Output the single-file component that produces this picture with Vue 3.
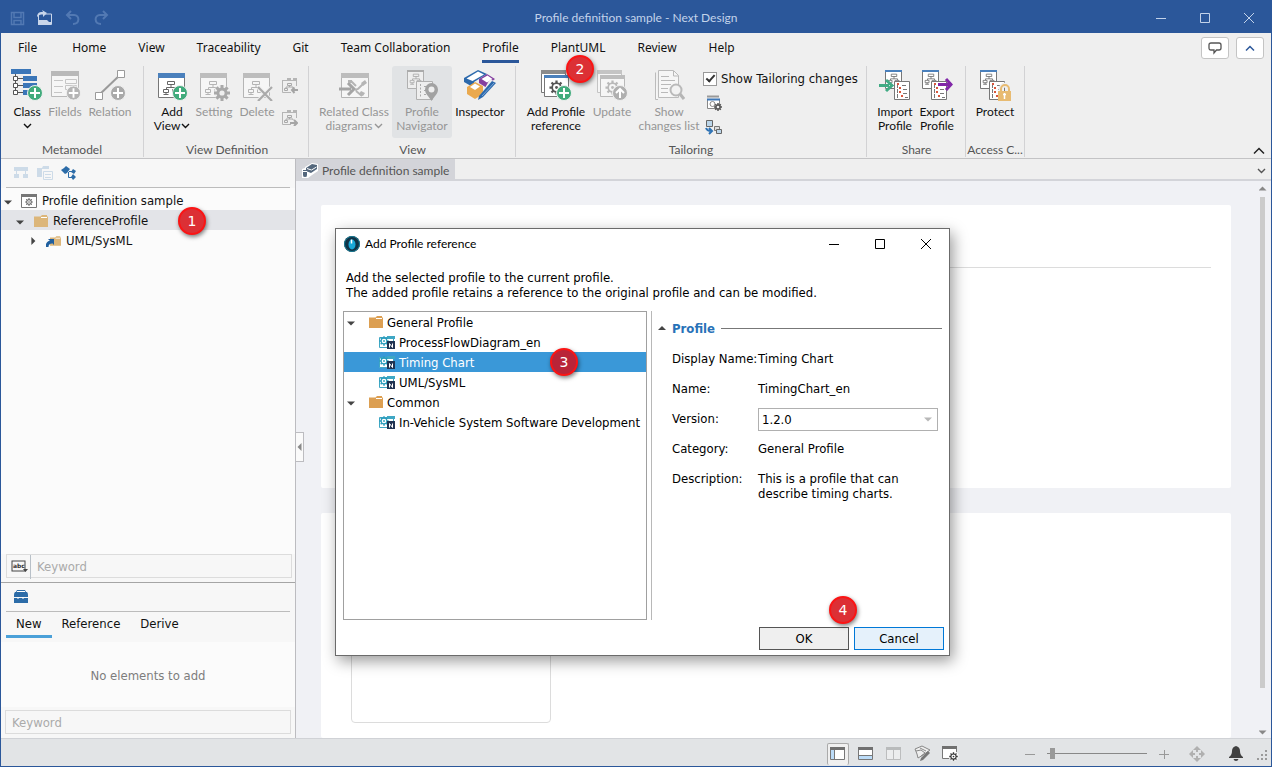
<script setup>
import { ref } from 'vue'

const menus = ['File', 'Home', 'View', 'Traceability', 'Git', 'Team Collaboration', 'Profile', 'PlantUML', 'Review', 'Help']
const activeMenu = ref('Profile')

const groups = [
  {
    title: 'Metamodel', cls: 'g-meta',
    buttons: [
      { icon: 'class', lines: ['Class'], drop: 'below', cls: 'w40' },
      { icon: 'fields', lines: ['Filelds'], off: true, cls: 'w36' },
      { icon: 'relation', lines: ['Relation'], off: true, cls: 'w54' }
    ]
  },
  {
    title: 'View Definition', cls: 'g-viewdef', small: ['doc-in', 'doc-out'],
    buttons: [
      { icon: 'addview', lines: ['Add', 'View'], drop: 'inline', cls: 'w40' },
      { icon: 'setting', lines: ['Setting'], off: true, cls: 'w44' },
      { icon: 'delete', lines: ['Delete'], off: true, cls: 'w42' }
    ]
  },
  {
    title: 'View', cls: 'g-view',
    buttons: [
      { icon: 'related', lines: ['Related Class', 'diagrams'], drop: 'inline', off: true, cls: 'w76' },
      { icon: 'navigator', lines: ['Profile', 'Navigator'], off: true, pressed: true, cls: 'w60' },
      { icon: 'inspector', lines: ['Inspector'], cls: 'w56' }
    ]
  },
  {
    title: 'Tailoring', cls: 'g-tailor', check: true,
    buttons: [
      { icon: 'addprofile', lines: ['Add Profile', 'reference'], cls: 'w68' },
      { icon: 'update', lines: ['Update'], off: true, cls: 'w44' },
      { icon: 'changes', lines: ['Show', 'changes list'], off: true, cls: 'w70' }
    ]
  },
  {
    title: 'Share', cls: 'g-share',
    buttons: [
      { icon: 'import', lines: ['Import', 'Profile'], cls: 'w42' },
      { icon: 'export', lines: ['Export', 'Profile'], cls: 'w42' }
    ]
  },
  { title: 'Access C...', cls: 'g-access', buttons: [{ icon: 'protect', lines: ['Protect'], cls: 'w58' }] }
]

const showChanges = ref(true)
const paletteTabs = ['New', 'Reference', 'Derive']
const activePalette = ref('New')
const profiles = [
  { name: 'General Profile', folder: true },
  { name: 'ProcessFlowDiagram_en' },
  { name: 'Timing Chart' },
  { name: 'UML/SysML' },
  { name: 'Common', folder: true },
  { name: 'In-Vehicle System Software Development' }
]
const selected = ref('Timing Chart')
const zoom = ref(3)
</script>

<template>
  <div class="window">
    <svg class="defs" width="0" height="0" aria-hidden="true">
      <symbol id="tree" viewBox="0 0 18 16">
        <path fill="none" stroke="currentColor" d="M5.500 0.500h7v3h-7zM9 3.500v3M4.500 8v-1.500h9V8M1.500 8.500h5v3h-5zM10.500 8.500h5v3h-5zM4 11.500v2M1.500 13.500h5" />
      </symbol>
      <symbol id="gear" viewBox="0 0 16 16">
        <g stroke="currentColor" stroke-width="3"><path d="M8 0v16M0 8h16M2.400 2.400l11.200 11.200M13.600 2.400L2.400 13.600" /></g>
        <circle cx="8" cy="8" r="5.500" fill="currentColor" /><circle cx="8" cy="8" r="2.600" fill="#efefef" />
      </symbol>
      <symbol id="gearline" viewBox="0 0 16 16">
        <g stroke="currentColor" stroke-width="2.400"><path d="M8 0.500v3M8 12.500v3M0.500 8h3M12.500 8h3M2.700 2.700l2 2M11.300 11.300l2 2M13.300 2.700l-2 2M4.700 11.300l-2 2" /></g>
        <circle cx="8" cy="8" r="4.600" fill="none" stroke="currentColor" stroke-width="1.800" /><circle cx="8" cy="8" r="1.500" fill="currentColor" />
      </symbol>
      <symbol id="plus" viewBox="0 0 16 16">
        <circle cx="8" cy="8" r="7.500" fill="currentColor" stroke="#efefef" /><path d="M8 3v10M3 8h10" stroke="#fff" stroke-width="2" />
      </symbol>
      <symbol id="chev" viewBox="0 0 9 6"><path d="M1 1l3.500 3.500L8 1" fill="none" stroke="currentColor" stroke-width="1.400" /></symbol>
      <symbol id="folder" viewBox="0 0 14 12"><path d="M0 1.500h6.500L8 0h5v1.500h1V12H0z" fill="currentColor" /><path d="M7 2.500h6" stroke="#fff" /></symbol>
      <symbol id="class" viewBox="0 0 32 32">
        <path fill="#3b76b8" d="M0 0h20v5H0zM12 7h14v5H12zM12 14h14v5H12zM12 21h14v5H12z" />
        <path fill="none" stroke="#555" d="M4.500 5v19M4.500 9.500H12M4.500 16.500H12M4.500 23.500H12" />
        <path fill="#fff" stroke="#555" d="M2.500 7.500h4v4h-4zM2.500 14.500h4v4h-4zM2.500 21.500h4v4h-4z" />
        <use href="#plus" x="16" y="16" width="16" height="16" color="#41ab7c" />
      </symbol>
      <symbol id="fields" viewBox="0 0 32 32">
        <path fill="#f6f6f6" stroke="#b9b9b9" d="M2.500 3.500h27v24h-27z" /><path fill="#b9b9b9" d="M2 2h28v5H2z" />
        <path fill="none" stroke="#c6c6c6" d="M5 11.500h9M5 17.500h9M5 23.500h8M16.500 10.500h11v4h-11zM16.500 16.500h11v4h-11z" />
        <use href="#plus" x="17" y="16" width="15" height="16" color="#b5b5b5" />
      </symbol>
      <symbol id="relation" viewBox="0 0 32 32">
        <path stroke="#9a9a9a" stroke-width="2" d="M5 26L27 5" />
        <path fill="#fff" stroke="#9a9a9a" d="M1.500 23.500h7v7h-7zM23.500 1.500h7v7h-7z" />
        <use href="#plus" x="16" y="16" width="16" height="16" color="#a9a9a9" />
      </symbol>
      <symbol id="addview" viewBox="0 0 32 32">
        <path fill="#fff" stroke="#777" d="M2.500 5.500h26v23h-26z" /><path fill="#4a80bc" d="M2 4h27v5H2z" />
        <use href="#tree" x="6" y="12" width="18" height="16" color="#666" />
        <use href="#plus" x="16" y="16" width="16" height="16" color="#41ab7c" />
      </symbol>
      <symbol id="setting" viewBox="0 0 32 32">
        <path fill="#f6f6f6" stroke="#b5b5b5" d="M2.500 5.500h26v23h-26z" /><path fill="#bdbdbd" d="M2 4h27v5H2z" />
        <use href="#tree" x="6" y="12" width="18" height="16" color="#b5b5b5" />
        <circle cx="24" cy="24" r="8" fill="#efefef" /><use href="#gear" x="16" y="16" width="16" height="16" color="#a9a9a9" />
      </symbol>
      <symbol id="delete" viewBox="0 0 32 32">
        <path fill="#f6f6f6" stroke="#b5b5b5" d="M2.500 5.500h26v23h-26z" /><path fill="#bdbdbd" d="M2 4h27v5H2z" />
        <use href="#tree" x="6" y="12" width="18" height="16" color="#b5b5b5" />
        <path d="M17 18l14 14M31 18L17 32" stroke="#efefef" stroke-width="4" /><path d="M17 18l14 14M31 18L17 32" stroke="#aaa" stroke-width="2.200" />
      </symbol>
      <symbol id="doc-in" viewBox="0 0 16 16">
        <path fill="none" stroke="#b5b5b5" d="M14.500 8V2.500H0.500v12H9" /><path fill="#b5b5b5" d="M5 0h4v2H5zM11 0h4v3h-4zM0 2h15v1H0z" />
        <path fill="none" stroke="#a9a9a9" d="M5.500 5.500h4v2h-4zM7.500 7.500V9M4 10.500V9h7v1M2.500 10.500h3v2h-3z" /><path d="M16 12h-5M12.500 9.500L10 12l2.500 3" stroke="#a5a5a5" stroke-width="2" fill="none" />
      </symbol>
      <symbol id="doc-out" viewBox="0 0 16 16">
        <path fill="none" stroke="#b5b5b5" d="M14.500 8V2.500H0.500v12H9" /><path fill="#b5b5b5" d="M5 0h4v2H5zM11 0h4v3h-4zM0 2h15v1H0z" />
        <path fill="none" stroke="#a9a9a9" d="M5.500 5.500h4v2h-4zM7.500 7.500V9M4 10.500V9h7v1M2.500 10.500h3v2h-3z" /><path d="M8 13h6M12 10l3 3-3 3" stroke="#a5a5a5" stroke-width="2" fill="none" />
      </symbol>
      <symbol id="related" viewBox="0 0 32 32">
        <path fill="#f6f6f6" stroke="#b5b5b5" d="M3.500 5.500h27v23h-27z" /><path fill="#bdbdbd" d="M3 4h28v5H3z" />
        <path d="M1 20h12M10 14l6 6-6 6" stroke="#a5a5a5" stroke-width="3" fill="none" />
        <path d="M13 12l5 5M17 21l3-1 5-5M18 22l6 5" stroke="#b5b5b5" stroke-width="2" fill="none" />
        <path fill="#b5b5b5" d="M23 14l4-3 2 3-4 3zM23 22l4 2-2 3-4-2zM10 11h4v3h-4z" />
      </symbol>
      <symbol id="navigator" viewBox="0 0 32 32">
        <path fill="#eee" stroke="#b0b0b0" d="M1.500 1.500h16v18h-16z" /><path fill="#ababab" d="M1 1h17v2H1z" />
        <use href="#tree" x="3" y="4" width="14" height="14" color="#a5a5a5" />
        <path fill="#eee" stroke="#b0b0b0" d="M10.500 12.500h16v18h-16z" /><path d="M14.500 15v13M18 17.500h7M18 21.500h4M18 25.500h4" stroke="#aaa" stroke-dasharray="2 1.500" />
        <path fill="#a2a2a2" d="M25.500 32c-3-5-6.500-7-6.500-11.500a6.500 6.500 0 0113 0c0 4.500-3.500 6.500-6.500 11.500z" /><circle cx="25.500" cy="20.500" r="3" fill="#eee" />
      </symbol>
      <symbol id="inspector" viewBox="0 0 32 32">
        <path fill="#2c69ac" d="M0 9L14 1l9 4-13 8v4H7l-7-4z" /><path fill="#fff" d="M2.500 9.500L14 2.500l6 3L8.500 12z" />
        <path fill="#8440a0" d="M15 10l8-5 8 5-8 6v3l-8-5z" /><path fill="#fff" d="M17.500 10l6-3.500 5 3.500-5.500 3.500z" />
        <path fill="#eaa94e" d="M3 18l8-5 8 4v8l-8 5-8-5z" /><path fill="#fff" d="M6 18l5-3.500 5 3-5 3.500z" />
        <path fill="#efefef" d="M26 10l7 4-16 18-4 1z" /><path fill="#2c69ac" d="M28 12l4 2-13 14-5 3 1-4z" /><path d="M18 27L30 14" stroke="#7ba6d6" />
      </symbol>
      <symbol id="addprofile" viewBox="0 0 32 32">
        <path fill="#fff" stroke="#777" d="M1.500 1.500h24v22h-24z" /><path fill="#8b8b8b" d="M1 1h25v4H1z" />
        <path fill="#fff" stroke="#777" d="M4.500 6.500h24v21h-24z" /><path fill="#4a80bc" d="M4 6h25v3H4z" />
        <use href="#gearline" x="9" y="11" width="15" height="15" color="#555" />
        <use href="#plus" x="16" y="16" width="16" height="16" color="#41ab7c" />
      </symbol>
      <symbol id="update" viewBox="0 0 32 32">
        <path fill="#f6f6f6" stroke="#c4c4c4" d="M1.500 1.500h24v22h-24z" /><path fill="#c4c4c4" d="M1 1h25v4H1z" />
        <path fill="#f6f6f6" stroke="#b9b9b9" d="M4.500 6.500h24v21h-24z" /><path fill="#bdbdbd" d="M4 6h25v4H4z" />
        <use href="#gearline" x="9" y="11" width="15" height="15" color="#b9b9b9" />
        <circle cx="24" cy="24" r="7.500" fill="#b0b0b0" stroke="#efefef" /><path d="M24 29v-8M20 24l4-4 4 4" fill="none" stroke="#fff" stroke-width="2" />
      </symbol>
      <symbol id="changes" viewBox="0 0 32 32">
        <path fill="#f6f6f6" stroke="#bbb" d="M5 30.500H2.500v-27M5.500 1.500h15l5 5v22h-20z" /><path fill="none" stroke="#b9b9b9" d="M20.500 2v5h5M8 7.500h8M8 11.500h14M8 15.500h10M8 19.500h7M8 23.500h7" />
        <circle cx="23" cy="21" r="5.500" fill="#f2f2f2" stroke="#b9b9b9" stroke-width="2" /><path d="M27 25l4 5" stroke="#b5b5b5" stroke-width="3" />
      </symbol>
      <symbol id="sheets" viewBox="0 0 32 32">
        <path fill="#fff" stroke="#777" d="M1.500 1.500h16v18h-16z" /><path fill="#4a80bc" d="M1 1h17v2H1z" />
        <use href="#tree" x="3" y="4" width="14" height="14" color="#666" />
        <path fill="#fff" stroke="#777" d="M10.500 12.500h15v18h-15z" /><path d="M18 16.500h5M19 20.500h4M19 24.500h4M21 28.500h3M13.500 15v14" stroke="#777" stroke-dasharray="4 1" />
        <path fill="#d9563c" d="M13 14h2v2h-2zM15 18h2v2h-2zM15 22h2v2h-2zM17 26h2v2h-2z" />
      </symbol>
      <symbol id="import" viewBox="0 0 32 32"><use href="#sheets" x="5" width="32" height="32" /><path d="M0 16.500h10M7 11l6 5.500L7 22" stroke="#41ab84" stroke-width="3" fill="none" /></symbol>
      <symbol id="export" viewBox="0 0 32 32"><use href="#sheets" width="32" height="32" /><path d="M17 15.500h11M25 10l5 5.500-5 5.500" stroke="#8127a8" stroke-width="3" fill="none" /></symbol>
      <symbol id="protect" viewBox="0 0 32 32">
        <use href="#sheets" width="32" height="32" /><path d="M22 22v-2a4 4 0 018 0v2" stroke="#efefef" stroke-width="5" fill="none" />
        <path d="M22 22v-2a4 4 0 018 0v3" stroke="#e8bb72" stroke-width="2" fill="none" /><path fill="#e8bb72" d="M19 22h13v10H19z" /><path d="M25.500 24v6M24 25.500h3" stroke="#fff" stroke-width="1.500" />
      </symbol>
      <symbol id="boxes" viewBox="0 0 16 16">
        <path fill="#fff" d="M3 4l7-4 6 1v7l-6 4-4 3H0V6l3-1z" /><path fill="#54677c" d="M4 5l6-4 5 1v4l-6 4-5-2zM1 7h4v5H1z" /><path stroke="#fff" fill="none" d="M5 5.500l4.500 1.500L14.500 4M1 8.500h4" /><ellipse cx="3" cy="12.500" rx="2" ry="1.500" fill="#54677c" />
      </symbol>
      <symbol id="profileitem" viewBox="0 0 16 13">
        <path fill="#fff" stroke="#3fa7c4" d="M0.500 1.500h14v10h-14z" /><path fill="#3fa7c4" d="M8 0h8v3H8z" /><use href="#gearline" x="0" y="0" width="10" height="10" color="#2b9cbc" />
        <path fill="#1f3352" d="M8 5h8v8H8z" /><path d="M10.500 11.500v-4l3 4v-4" stroke="#fff" fill="none" />
      </symbol>
      <symbol id="panel" viewBox="0 0 16 14"><path fill="#fff" stroke="#777" d="M0.500 0.500h14v12h-14z" /><path fill="#707070" d="M0 0h15v3H0z" /></symbol>
    </svg>

    <header class="titlebar">
      <div class="quick">
        <button type="button" class="ico faint" aria-label="Save"><svg width="16" height="16"><path d="M2.500 2.500h12v12h-12zM5 2.500v5h7v-5M5 14.500v-4h7v4" fill="none" stroke="currentColor" stroke-width="1.500" /></svg></button>
        <button type="button" class="ico bright" aria-label="Open"><svg width="16" height="16"><path d="M8 4h6.500v10.500h-13V5" fill="none" stroke="currentColor" /><path d="M1 10h9l2 2h2v3H1zM0 6c1-4 3-4 6-4l-1-2 5 3-4 4V4.500C3 4.500 2 5 0 7z" fill="currentColor" /></svg></button>
        <button type="button" class="ico faint" aria-label="Undo"><svg width="16" height="16"><path d="M6 1L2 5l4 4M2 5h7c6 0 6 9-1 9" fill="none" stroke="currentColor" stroke-width="2" /></svg></button>
        <button type="button" class="ico faint" aria-label="Redo"><svg width="16" height="16"><path d="M10 1l4 4-4 4M14 5H7c-6 0-6 9 1 9" fill="none" stroke="currentColor" stroke-width="2" /></svg></button>
      </div>
      <h1>Profile definition sample - Next Design</h1>
      <div class="winbtns">
        <button type="button" class="ico" aria-label="Minimize"><svg width="12" height="12"><path d="M1 6.500h10" stroke="currentColor" /></svg></button>
        <button type="button" class="ico" aria-label="Maximize"><svg width="12" height="12"><path d="M1.500 1.500h9v9h-9z" fill="none" stroke="currentColor" /></svg></button>
        <button type="button" class="ico" aria-label="Close"><svg width="12" height="12"><path d="M1 1l10 10M11 1L1 11" stroke="currentColor" /></svg></button>
      </div>
    </header>

    <nav class="menubar">
      <button v-for="m in menus" :key="m" type="button" class="menu" :class="{ active: m === activeMenu }" @click="activeMenu = m">{{ m }}</button>
      <div class="menu-right">
        <button type="button" class="boxbtn" aria-label="Feedback"><svg width="14" height="13"><path d="M3 1h8q2 0 2 2v3q0 2-2 2H8.500L6 11V8H3Q1 8 1 6V3q0-2 2-2z" fill="none" stroke="#555" stroke-width="1.300" /></svg></button>
        <button type="button" class="boxbtn blue" aria-label="Collapse"><svg width="10" height="7"><path d="M1 5.500l4-4 4 4" fill="none" stroke="currentColor" stroke-width="1.500" /></svg></button>
      </div>
    </nav>

    <section class="ribbon">
      <div v-for="g in groups" :key="g.title" class="group" :class="g.cls">
        <div class="group-body">
          <button v-for="b in g.buttons" :key="b.icon" type="button" class="big" :class="[b.cls, { off: b.off, pressed: b.pressed }]">
            <svg width="32" height="32"><use :href="'#' + b.icon" /></svg>
            <span v-for="(l, i) in b.lines" :key="l" class="line">{{ l }}<svg v-if="b.drop === 'inline' && i === 1" width="9" height="6"><use href="#chev" /></svg></span>
            <span v-if="b.drop === 'below'" class="line"><svg width="9" height="6"><use href="#chev" /></svg></span>
          </button>
          <div v-if="g.small" class="smallcol">
            <button v-for="s in g.small" :key="s" type="button" class="ico" :aria-label="s"><svg width="16" height="16"><use :href="'#' + s" /></svg></button>
          </div>
          <div v-if="g.check" class="checkcol">
            <label class="check"><input v-model="showChanges" type="checkbox"><span>Show Tailoring changes</span></label>
            <button type="button" class="ico" aria-label="Tailoring settings"><svg width="18" height="16"><path d="M2 1.500h12" stroke="#999" stroke-width="2" /><path d="M2.500 4.500h12v9h-12z" fill="#fff" stroke="#888" /><path d="M2 4.500h13" stroke="#3f78b8" stroke-width="2" /><circle cx="7.500" cy="9" r="2.500" fill="none" stroke="#888" /><use href="#gear" x="9" y="8" width="8" height="8" color="#555" /></svg></button>
            <button type="button" class="ico" aria-label="Apply tailoring"><svg width="18" height="16"><path d="M1.500 1.500h6v6h-6z" fill="#bcd6ea" stroke="#666" /><path d="M9.500 7.500h5v4h-5z" fill="#ddd" stroke="#777" /><path d="M11.500 10.500h5v4h-5z" fill="#bcd6ea" stroke="#666" /><path d="M1 9q1 3 5 3M4 9l3 3-3 3" fill="none" stroke="#2f73b5" stroke-width="2" /></svg></button>
          </div>
        </div>
        <div class="group-title">{{ g.title }}</div>
      </div>
      <button type="button" class="ico fold" aria-label="Collapse ribbon"><svg width="12" height="8"><path d="M1 6.500l5-5 5 5" fill="none" stroke="#222" stroke-width="1.500" /></svg></button>
    </section>

    <main class="work">
      <aside class="side">
        <div class="toolbar">
          <button type="button" class="ico pale" aria-label="Hierarchy"><svg width="16" height="14"><path fill="currentColor" d="M1 1h14v4H1zM3 5h1v4H3zM12 5h1v4h-1zM1 8h5v4H1zM10 8h5v4h-5z" /></svg></button>
          <button type="button" class="ico pale" aria-label="Folders"><svg width="16" height="14"><path fill="currentColor" d="M0 2h5l1-2h6v3H5v8H0z" /><path d="M6.500 5.500h9v8h-9zM8 8.500h6M8 11.500h6" fill="none" stroke="currentColor" /></svg></button>
          <button type="button" class="ico deep" aria-label="Relations"><svg width="16" height="14"><path fill="currentColor" d="M0 4l3-2 2-2 4 3-3 4-2 1zM12 3l3 2-2 3-3-2zM12 8l3 3-3 3-2-3z" /><path d="M7.500 6v5.500H11M8 5.500h3" fill="none" stroke="currentColor" /></svg></button>
        </div>
        <ul class="tree">
          <li class="row"><i class="tri down"></i><svg class="t-ico" width="16" height="14"><path d="M0.500 1.500h15v12H0.500z" fill="#fff" stroke="#777" /><path d="M0 1.500h16" stroke="#777" stroke-width="3" /><use href="#gearline" x="4" y="4" width="8" height="8" color="#555" /></svg>Profile definition sample</li>
          <li class="row lvl1 sel"><i class="tri down"></i><svg class="t-ico tan" width="14" height="12"><use href="#folder" /></svg>ReferenceProfile</li>
          <li class="row lvl2"><i class="tri right"></i><svg class="t-ico tan" width="15" height="13"><use href="#folder" x="4" y="0" width="11" height="12" /><path d="M1 12q0-5 5-5" fill="none" stroke="#1f5f9f" stroke-width="3" /><path d="M2 4h6v6z" fill="#1f5f9f" /></svg>UML/SysML</li>
        </ul>
        <div class="search">
          <svg width="24" height="24" aria-hidden="true"><rect x="5" y="6" width="13" height="10" fill="none" stroke="#444" /><text x="6" y="13" class="abc">abc</text><path d="M16 14h5l-2.500 3z" fill="#444" /></svg>
          <input type="text" placeholder="Keyword" aria-label="Model keyword">
        </div>
        <section class="palette">
          <div class="toolbar">
            <button type="button" class="ico deep" aria-label="Toolbox"><svg width="16" height="14"><path fill="currentColor" d="M4 0h8l1 2h1q1 1 1 3v2H1V5q0-2 1-3h1zM1 8h14v5H1z" /><path d="M4 1.500h8M5 7v2M10 7v2" stroke="#fff" /></svg></button>
          </div>
          <div class="ptabs">
            <button v-for="t in paletteTabs" :key="t" type="button" class="ptab" :class="{ active: t === activePalette }" @click="activePalette = t">{{ t }}</button>
          </div>
          <p class="empty">No elements to add</p>
          <input type="text" class="kw" placeholder="Keyword" aria-label="Element keyword">
        </section>
      </aside>

      <section class="editor">
        <div class="doctabs">
          <button type="button" class="doctab"><svg width="16" height="16"><use href="#boxes" /></svg>Profile definition sample</button>
          <button type="button" class="ico more" aria-label="Open documents"><svg width="9" height="6"><use href="#chev" /></svg></button>
        </div>
        <div class="canvas">
          <div class="cards">
            <div class="card first"><hr></div>
            <div class="card second"><div class="tile"></div></div>
          </div>
          <div class="scroll"><i class="tri up"></i><div class="thumb"></div><i class="tri down"></i></div>
          <button type="button" class="handle" aria-label="Collapse panel"><svg width="5" height="8"><path d="M4.500 0v8L0.500 4z" fill="#888" /></svg></button>
        </div>
      </section>
    </main>

    <footer class="status">
      <button type="button" class="ico st on" aria-label="Left pane"><svg width="16" height="14"><use href="#panel" /><path fill="#bcdcf8" d="M1 3h3v9H1z" /><path d="M4.500 3v9" stroke="#777" /></svg></button>
      <button type="button" class="ico st" aria-label="Bottom pane"><svg width="16" height="14"><use href="#panel" /><path fill="#bcdcf8" d="M1 9h13v3H1z" /><path d="M1 8.500h13" stroke="#777" /></svg></button>
      <button type="button" class="ico st dim" aria-label="Split pane"><svg width="16" height="14"><use href="#panel" /><path d="M7.500 3v10" stroke="#777" /></svg></button>
      <button type="button" class="ico st" aria-label="Inspector"><svg width="17" height="17" viewBox="0 0 17 17"><path fill="#eee" stroke="#888" d="M1 4l7-3 8 4-7 5-5 3-1-4z" /><path fill="none" stroke="#888" d="M2 6l5-1 4 3-4 3M6 3l6 3" /><path fill="#777" d="M14 6l2 2-7 7-3 1 1-3z" /></svg></button>
      <button type="button" class="ico st" aria-label="View settings"><svg width="17" height="15"><use href="#panel" width="16" height="14" /><circle cx="11.500" cy="10" r="5" fill="#fff" /><use href="#gearline" x="7" y="6" width="9" height="9" color="#333" /></svg></button>
      <div class="zoombar">
        <button type="button" class="ico" aria-label="Zoom out"><svg width="10" height="10"><path d="M0 5.500h10" stroke="#999" /></svg></button>
        <input v-model="zoom" type="range" min="0" max="100" aria-label="Zoom">
        <button type="button" class="ico" aria-label="Zoom in"><svg width="10" height="10"><path d="M0 5.500h10M5.500 1v9" stroke="#999" /></svg></button>
      </div>
      <button type="button" class="ico fit" aria-label="Fit"><svg width="16" height="16"><path fill="#b0b0b0" d="M8 0l4 4H9v2H7V4H4zM8 16l4-4H9v-2H7v2H4zM0 8l4-4v3h2v2H4v3zM16 8l-4-4v3h-2v2h2v3z" /></svg></button>
      <button type="button" class="ico bell" aria-label="Notifications"><svg width="14" height="15"><path fill="#404040" d="M7 0q4 1 4 5 0 4 3 6v1H0v-1q3-2 3-6 0-4 4-5zM4.500 13h5Q9 15 7 15t-2.500-2z" /></svg></button>
      <svg class="grip" width="11" height="11"><path fill="#999" d="M8 0h2v2H8zM8 4h2v2H8zM8 8h2v2H8zM4 4h2v2H4zM4 8h2v2H4zM0 8h2v2H0z" /></svg>
    </footer>

    <div class="dialog" role="dialog" aria-labelledby="dlg-title">
      <div class="dlg-head">
        <svg width="16" height="16"><circle cx="8" cy="8" r="8" fill="#0f3347" /><circle cx="8" cy="8" r="7.500" fill="none" stroke="#167c95" /><ellipse cx="8" cy="8.500" rx="3.500" ry="5" fill="#18a8d8" /><path d="M7.500 3.500v4" stroke="#fff" stroke-width="1.500" /></svg>
        <h2 id="dlg-title">Add Profile reference</h2>
        <button type="button" class="ico" aria-label="Minimize dialog"><svg width="12" height="12"><path d="M1 6.500h10" stroke="currentColor" /></svg></button>
        <button type="button" class="ico" aria-label="Maximize dialog"><svg width="12" height="12"><path d="M1.500 1.500h9v9h-9z" fill="none" stroke="currentColor" /></svg></button>
        <button type="button" class="ico" aria-label="Close dialog"><svg width="12" height="12"><path d="M1 1l10 10M11 1L1 11" stroke="currentColor" /></svg></button>
      </div>
      <p class="intro">Add the selected profile to the current profile.<br>The added profile retains a reference to the original profile and can be modified.</p>
      <div class="dlg-body">
        <ul class="plist">
          <li v-for="p in profiles" :key="p.name" class="row" :class="{ leaf: !p.folder, picked: p.name === selected }" @click="selected = p.name">
            <template v-if="p.folder"><i class="tri down"></i><svg class="t-ico orange" width="14" height="12"><use href="#folder" /></svg></template>
            <svg v-else class="p-ico" width="16" height="13"><use href="#profileitem" /></svg>{{ p.name }}
          </li>
        </ul>
        <section class="detail">
          <h3><i class="tri up"></i><span>Profile</span></h3>
          <dl>
            <dt>Display Name:</dt><dd>Timing Chart</dd>
            <dt>Name:</dt><dd>TimingChart_en</dd>
            <dt><label for="version">Version:</label></dt>
            <dd class="ver"><select id="version"><option>1.2.0</option></select><i class="tri down"></i></dd>
            <dt>Category:</dt><dd>General Profile</dd>
            <dt>Description:</dt><dd>This is a profile that can describe timing charts.</dd>
          </dl>
        </section>
      </div>
      <div class="dlg-foot">
        <button type="button" class="btn">OK</button>
        <button type="button" class="btn primary">Cancel</button>
      </div>
      <span class="badge b3">3</span>
      <span class="badge b4">4</span>
    </div>
    <span class="badge b1">1</span>
    <span class="badge b2">2</span>
  </div>
</template>

<style>
body { margin: 0; }
</style>

<style scoped>
.window {
  --wide: "DejaVu Sans Condensed", "DejaVu Sans", Verdana, sans-serif;
  --menu: "Noto Sans", "Open Sans", sans-serif;
  --ui: Lato, "Open Sans", sans-serif;
  position: relative;
  display: flex;
  flex-direction: column;
  box-sizing: border-box;
  height: 100vh;
  border: 1px solid #2b579a;
  border-top: 0;
  overflow: hidden;
  background: #efefef;
  color: #111;
  font: 12px/14px var(--ui);
}
.window *, .window *::after { box-sizing: border-box; }
.defs { position: absolute; }
button, input, select { font: inherit; color: inherit; margin: 0; }
button { padding: 0; border: 0; background: none; }
h1, h2, h3, p, ul, dl, dd { margin: 0; padding: 0; font-weight: normal; }
ul { list-style: none; }
.ico { display: flex; align-items: center; justify-content: center; }
svg { display: block; flex: none; }

.titlebar { flex: none; display: grid; grid-template-columns: 1fr auto 1fr; align-items: center; height: 33px; padding-top: 2px; background: #2b579a; color: #c3d3ea; }
.titlebar h1 { font-size: 12px; }
.quick { display: flex; gap: 12px; padding-left: 8px; }
.faint { color: #5279b3; }
.bright { color: #c9d6ea; }
.winbtns { display: flex; justify-content: flex-end; gap: 32px; padding-right: 16px; }

.menubar { flex: none; display: flex; gap: 32px; height: 30px; padding-left: 17px; font-family: var(--menu); }
.menu { height: 30px; border-bottom: 3px solid transparent; line-height: 29px; white-space: nowrap; }
.menu:first-child { margin-right: 3px; }
.menu.active { border-color: #2b579a; }
.menu-right { display: flex; gap: 7px; margin: 4px 7px 0 auto; }
.boxbtn { display: flex; align-items: center; justify-content: center; width: 28px; height: 22px; border: 1px solid #c4c4c4; border-radius: 3px; background: #fff; }
.blue { color: #2b579a; }

.ribbon { flex: none; position: relative; display: flex; height: 96px; padding: 3px 0 1px; border-bottom: 1px solid #c3c3c5; }
.group { display: flex; flex-direction: column; justify-content: space-between; border-right: 1px solid #d2d2d4; }
.g-meta { width: 143px; padding-left: 6px; }
.g-viewdef { width: 165px; padding-left: 8px; }
.g-view { width: 207px; padding-left: 7px; }
.g-tailor { width: 351px; padding-left: 6px; }
.g-share { width: 99px; padding-left: 7px; }
.g-access { width: 59px; }
.group-body { display: flex; }
.group-title { padding-right: 6px; color: #555; text-align: center; }
.g-access .group-title { padding: 0; white-space: nowrap; }
.big { display: flex; flex-direction: column; align-items: center; height: 72px; padding-top: 3px; border-radius: 3px; }
.big > svg { margin-bottom: 4px; }
.big.off { color: #969696; }
.big.pressed { background: #e1e3e5; }
.line { display: flex; align-items: center; gap: 1px; height: 14px; white-space: nowrap; }
.w36 { width: 36px; } .w40 { width: 40px; } .w42 { width: 42px; } .w44 { width: 44px; } .w54 { width: 54px; }
.w56 { width: 56px; } .w58 { width: 58px; } .w60 { width: 60px; } .w68 { width: 68px; } .w70 { width: 70px; } .w76 { width: 76px; }
.smallcol { display: flex; flex-direction: column; gap: 16px; width: 24px; padding: 12px 0 0 4px; }
.smallcol .ico { width: 16px; }
.checkcol { display: flex; flex-direction: column; align-items: flex-start; gap: 8px; padding-top: 5px; }
.checkcol .ico { margin-left: 1px; }
.check { display: flex; align-items: center; gap: 4px; height: 16px; margin-left: -1px; font: 13px/16px var(--wide); white-space: nowrap; }
.check input { appearance: none; display: grid; place-items: center; width: 14px; height: 14px; border: 1px solid #999; background: #fff; }
.check input:checked::after { content: ""; width: 5px; height: 9px; margin-bottom: 3px; border: solid #333; border-width: 0 2px 2px 0; transform: rotate(42deg); }
.fold { position: absolute; right: 6px; bottom: 3px; }

.work { flex: 1; display: flex; min-height: 0; }
.side { flex: none; display: flex; flex-direction: column; width: 295px; border-right: 1px solid #bcbcc0; background: #f7f7f7; font: 13px/20px var(--wide); }
.toolbar { display: flex; align-items: center; gap: 8px; height: 29px; margin: 0 5px; padding-left: 7px; border-bottom: 1px solid #bcbcbc; }
.pale { color: #cddbe8; }
.deep { color: #2c6ca8; }
.tree { flex: 1; padding-top: 2px; background: #fbfbfb; }
.row { display: flex; align-items: center; height: 20px; white-space: nowrap; }
.tree .row { padding: 2px 0 0 3px; }
.tree .lvl1 { padding-left: 15px; }
.tree .lvl2 { padding-left: 28px; }
.sel { background: #e3e4e8; }
.t-ico { margin: 0 5px 0 9px; }
.lvl1 .t-ico { margin-left: 10px; }
.tan { color: #dcb67a; }
.orange { color: #dc9f52; }
.tri { flex: none; width: 8px; height: 8px; background: #444; }
.tri.down { clip-path: polygon(0 45%, 100% 45%, 50% 95%); }
.tri.up { clip-path: polygon(0 70%, 100% 70%, 50% 20%); }
.tri.right { clip-path: polygon(30% 0, 80% 50%, 30% 100%); }
.search { display: flex; height: 24px; margin: 0 3px 4px 5px; border: 1px solid #dcdcdc; }
.search svg { border-right: 1px solid #b8c0c8; }
.abc { font: bold 6px/8px "DejaVu Sans", sans-serif; fill: #333; }
.search input, .kw { min-width: 0; border: 0; background: none; padding: 1px 6px 0; outline: 0; }
.search input { flex: 1; }
input::placeholder { color: #aaa; opacity: 1; }
.palette { display: flex; flex-direction: column; height: 156px; border-top: 1px solid #a5a5a5; }
.palette .toolbar { flex: none; }
.ptabs { display: flex; margin-left: 5px; }
.ptab { height: 26px; padding: 0 10px; border-bottom: 3px solid transparent; line-height: 23px; }
.ptab.active { border-color: #4aa0d8; }
.empty { flex: 1; display: grid; place-items: center; margin-top: 4px; padding-top: 3px; background: #fbfbfb; color: #7d7d7d; }
.kw { height: 24px; margin: 3px 4px 4px; border: 1px solid #dcdcdc; }

.editor { flex: 1; display: flex; flex-direction: column; min-width: 0; }
.doctabs { flex: none; display: flex; justify-content: space-between; height: 22px; border-bottom: 2px solid #d3d4d9; }
.doctab { display: flex; align-items: center; gap: 4px; height: 22px; padding: 2px 6px 0; background: #d3d4d9; color: #555; white-space: nowrap; }
.more { margin: 3px 5px 0 0; color: #555; }
.canvas { position: relative; flex: 1; display: flex; min-height: 0; background: #f0f1f5; }
.cards { flex: 1; display: flex; flex-direction: column; gap: 25px; padding: 24px 30px 0 25px; }
.card { background: #fff; border-radius: 2px; }
.first { flex: none; height: 283px; padding: 62px 20px 0 30px; }
.card hr { height: 1px; margin: 0; border: 0; background: #dcdcdc; }
.second { flex: 1; padding: 30px 30px 15px; }
.tile { width: 200px; height: 100%; border: 1px solid #dcdcdc; border-radius: 4px; }
.scroll { display: flex; flex-direction: column; align-items: center; width: 15px; padding: 4px 2px 3px 0; gap: 4px; margin-left: -5px; }
.scroll .tri { background: #888; }
.scroll .tri.down { margin-top: auto; }
.thumb { flex: 0 1 491px; width: 5px; background: #cbcbcb; }
.handle { position: absolute; left: -1px; top: 45%; width: 9px; height: 30px; border: 1px solid #bcbcc0; background: #fafafa; display: grid; place-items: center; }

.status { flex: none; display: flex; align-items: center; height: 28px; padding: 2px 3px 0 0; border-top: 1px solid #d0d2d6; background: #e2e4e6; }
.st { width: 22px; height: 22px; margin-right: 6px; }
.st.on { margin-left: auto; border: 1px solid #aaa; border-bottom: 0; border-radius: 2px; background: #f0f0f0; }
.dim { opacity: 0.35; }
.zoombar { display: flex; align-items: center; gap: 12px; margin-left: 58px; }
.zoombar input { appearance: none; width: 100px; height: 12px; background: linear-gradient(#888, #888) center / 100% 1px no-repeat; }
.zoombar input::-webkit-slider-thumb { appearance: none; width: 5px; height: 11px; background: #999; }
.fit { margin: 0 24px 0 20px; }
.bell { margin-right: 14px; }
.grip { margin-top: 4px; }

.dialog { position: absolute; left: 334px; top: 228px; display: flex; flex-direction: column; width: 615px; height: 428px; padding: 0 5px 5px 7px; border: 1px solid #6b6b6b; background: #fff; box-shadow: 3px 5px 14px rgba(0, 0, 0, 0.4); color: #000; font: 13px/15px var(--wide); }
.dlg-head { flex: none; display: flex; align-items: center; gap: 34px; height: 30px; padding: 0 12px 0 1px; font: 12px/14px var(--ui); }
.dlg-head h2 { flex: 1; margin-left: -29px; font-size: 12px; }
.intro { margin: 11px 0 11px 3px; white-space: nowrap; }
.dlg-body { flex: 1; display: grid; grid-template-columns: 304px 1fr; gap: 4px; }
.plist { border: 1px solid #a0a0a0; overflow: hidden; }
.plist .row { padding-left: 3px; }
.plist .t-ico { margin: 0 4px 0 14px; }
.plist .leaf { padding-left: 35px; }
.p-ico { margin-right: 4px; }
.picked { background: #3a98d8; color: #fff; }
.detail { border-left: 1px solid #b8b8b8; padding: 10px 2px 0 6px; }
.detail h3 { display: flex; align-items: center; gap: 6px; height: 15px; color: #2872b8; font-size: 13px; font-weight: bold; }
.detail h3::after { content: ""; flex: 1; height: 1px; background: #777; }
dl { display: grid; grid-template-columns: 86px 1fr; row-gap: 15px; margin: 15px 4px 0 14px; }
dt { white-space: nowrap; }
.ver { position: relative; height: 15px; }
.ver select { appearance: none; width: 100%; height: 23px; margin-top: -3px; padding: 0 3px; border: 1px solid #b0b0b0; border-radius: 0; background: #fff; }
.ver .tri { position: absolute; right: 6px; top: 3px; background: #b8b8b8; }
.dlg-foot { flex: none; display: flex; justify-content: flex-end; gap: 5px; margin-top: 7px; }
.btn { width: 90px; height: 23px; border: 1px solid #555; background: #efefef; }
.primary { border-color: #0078d7; background: #e5f1fb; }

.badge { position: absolute; display: grid; place-items: center; width: 28px; height: 28px; border: 2px solid #fb1414; border-radius: 50%; background: #dc3035; color: #fff; box-shadow: 1px 2px 4px rgba(0, 0, 0, 0.5); font: 14px/15px "DejaVu Sans", sans-serif; }
.b1 { left: 177px; top: 207px; }
.b2 { left: 565px; top: 55px; }
.b3 { left: 214px; top: 119px; background: #b92438; }
.b4 { left: 493px; top: 367px; }
</style>
